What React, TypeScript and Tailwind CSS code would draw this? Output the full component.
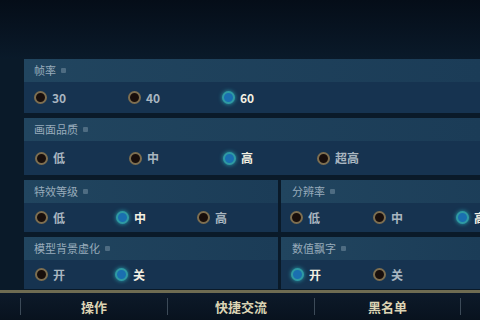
import React from 'react';

interface Opt {
  label: string;
  on?: boolean;
}

const FONT = { fontFamily: '"Noto Sans CJK SC", "Noto Sans", sans-serif' };

function Radio({ on }: { on?: boolean }) {
  return on ? (
    <span className="w-[13px] h-[13px] rounded-full border-[2px] border-[#2f9aa3] bg-[#1a6fb0] shadow-[0_0_4px_#2aa3b0] shrink-0" />
  ) : (
    <span className="w-[13px] h-[13px] rounded-full border-[2px] border-[#7d6e50] bg-[#180e0b] shrink-0" />
  );
}

function Options({ opts, step, pad }: { opts: Opt[]; step: string; pad: string }) {
  return (
    <div className={`flex items-center h-full ${pad}`}>
      {opts.map((o) => (
        <div key={o.label} className={`flex items-center gap-[5px] ${step}`}>
          <Radio on={o.on} />
          <span
            className={`text-[12px] font-bold leading-none ${
              o.on ? 'text-[#f3f0e2]' : 'text-[#a9b6c0]'
            }`}
          >
            {o.label}
          </span>
        </div>
      ))}
    </div>
  );
}

function Header({ title, pad }: { title: string; pad: string }) {
  return (
    <div className={`h-[23px] flex items-center gap-[5px] bg-gradient-to-r from-[#21455f] to-[#1b3c57] ${pad}`}>
      <span className="text-[11px] text-[#98acbb] leading-none">{title}</span>
      <span className="w-[5px] h-[5px] bg-[#4e6c82] rounded-[1px]" />
    </div>
  );
}

export default function App() {
  return (
    <div
      className="w-[480px] h-[320px] bg-[#07111d] flex flex-col overflow-hidden"
      style={FONT}
    >
      {/* top dark area */}
      <div className="h-[59px] bg-gradient-to-b from-[#050d18] to-[#0a1a2a]" />

      <div className="flex-1 flex flex-col gap-[5px] pl-[24px] bg-[#0a1a29]">
        {/* 帧率 */}
        <div className="flex flex-col">
          <Header title="帧率" pad="pl-[10px]" />
          <div className="h-[31px] bg-[#163350]">
            <Options
              pad="pl-[10px]"
              step="w-[94px]"
              opts={[{ label: '30' }, { label: '40' }, { label: '60', on: true }]}
            />
          </div>
        </div>

        {/* 画面品质 */}
        <div className="flex flex-col">
          <Header title="画面品质" pad="pl-[10px]" />
          <div className="h-[34px] bg-[#163350]">
            <Options
              pad="pl-[11px]"
              step="w-[94px]"
              opts={[
                { label: '低' },
                { label: '中' },
                { label: '高', on: true },
                { label: '超高' },
              ]}
            />
          </div>
        </div>

        {/* 特效等级 / 分辨率 */}
        <div className="flex gap-[3px]">
          <div className="w-[254px] flex flex-col">
            <Header title="特效等级" pad="pl-[10px]" />
            <div className="h-[29px] bg-[#163350]">
              <Options
                pad="pl-[11px]"
                step="w-[82px]"
                opts={[{ label: '低' }, { label: '中', on: true }, { label: '高' }]}
              />
            </div>
          </div>
          <div className="flex-1 flex flex-col">
            <Header title="分辨率" pad="pl-[11px]" />
            <div className="h-[29px] bg-[#163350] overflow-hidden">
              <Options
                pad="pl-[9px]"
                step="w-[83px] shrink-0"
                opts={[{ label: '低' }, { label: '中' }, { label: '高', on: true }]}
              />
            </div>
          </div>
        </div>

        {/* 模型背景虚化 / 数值飘字 */}
        <div className="flex gap-[3px]">
          <div className="w-[254px] flex flex-col">
            <Header title="模型背景虚化" pad="pl-[10px]" />
            <div className="h-[29px] bg-[#163350]">
              <Options
                pad="pl-[11px]"
                step="w-[80px]"
                opts={[{ label: '开' }, { label: '关', on: true }]}
              />
            </div>
          </div>
          <div className="flex-1 flex flex-col">
            <Header title="数值飘字" pad="pl-[11px]" />
            <div className="h-[29px] bg-[#163350]">
              <Options
                pad="pl-[10px]"
                step="w-[82px]"
                opts={[{ label: '开', on: true }, { label: '关' }]}
              />
            </div>
          </div>
        </div>
      </div>

      {/* bottom tabs */}
      <div className="h-[3px] bg-[#6f6c52]" />
      <div className="h-[27px] bg-gradient-to-b from-[#0d1a2a] to-[#08121e] flex items-center pl-[20px]">
        {['操作', '快捷交流', '黑名单'].map((t, i) => (
          <div
            key={t}
            className={`w-[147px] h-[17px] flex items-center justify-center border-l border-[#3c4a58] ${
              i === 2 ? 'border-r' : ''
            }`}
          >
            <span className="text-[13px] font-bold text-[#dcd4b4] leading-none">{t}</span>
          </div>
        ))}
      </div>
    </div>
  );
}
